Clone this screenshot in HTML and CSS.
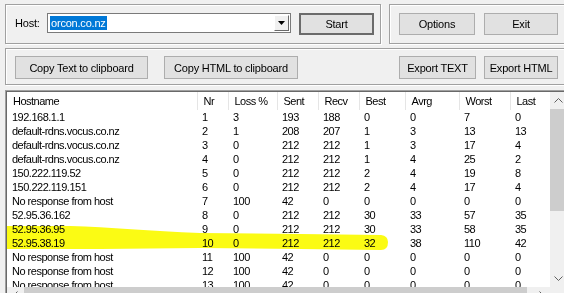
FILE: index.html
```html
<!DOCTYPE html>
<html>
<head>
    <title>Trace Route</title>
    <link rel="stylesheet" href="styles.css">
</head>
<body>
    <div class="app">
        <div class="top-row">
            <div class="group host-group">
                <span class="host-label">Host:</span>
                <div class="combo">
                    <span class="combo-text">orcon.co.nz</span>
                    <span class="combo-drop">
                        <svg width="7" height="4" viewBox="0 0 7 4"><polygon points="0,0 7,0 3.5,4" fill="#000"/></svg>
                    </span>
                </div>
                <button class="btn btn-default start-btn">Start</button>
            </div>
            <div class="group action-group">
                <button class="btn options-btn">Options</button>
                <button class="btn exit-btn">Exit</button>
            </div>
        </div>

        <div class="group export-group">
            <button class="btn copy-text-btn">Copy Text to clipboard</button>
            <button class="btn copy-html-btn">Copy HTML to clipboard</button>
            <button class="btn export-text-btn">Export TEXT</button>
            <button class="btn export-html-btn">Export HTML</button>
        </div>

        <div class="listview">
            <div class="list-body">
                <table class="hops">
                    <colgroup>
                        <col class="c-host"><col class="c-nr"><col class="c-loss"><col class="c-sent"><col class="c-recv">
                        <col class="c-best"><col class="c-avrg"><col class="c-worst"><col class="c-last">
                    </colgroup>
                    <thead>
                        <tr><th>Hostname</th><th>Nr</th><th>Loss %</th><th>Sent</th><th>Recv</th><th>Best</th><th>Avrg</th><th>Worst</th><th>Last</th></tr>
                    </thead>
                    <tbody>
                        <tr><td>192.168.1.1</td><td>1</td><td>3</td><td>193</td><td>188</td><td>0</td><td>0</td><td>7</td><td>0</td></tr>
                        <tr><td>default-rdns.vocus.co.nz</td><td>2</td><td>1</td><td>208</td><td>207</td><td>1</td><td>3</td><td>13</td><td>13</td></tr>
                        <tr><td>default-rdns.vocus.co.nz</td><td>3</td><td>0</td><td>212</td><td>212</td><td>1</td><td>3</td><td>17</td><td>4</td></tr>
                        <tr><td>default-rdns.vocus.co.nz</td><td>4</td><td>0</td><td>212</td><td>212</td><td>1</td><td>4</td><td>25</td><td>2</td></tr>
                        <tr><td>150.222.119.52</td><td>5</td><td>0</td><td>212</td><td>212</td><td>2</td><td>4</td><td>19</td><td>8</td></tr>
                        <tr><td>150.222.119.151</td><td>6</td><td>0</td><td>212</td><td>212</td><td>2</td><td>4</td><td>17</td><td>4</td></tr>
                        <tr><td>No response from host</td><td>7</td><td>100</td><td>42</td><td>0</td><td>0</td><td>0</td><td>0</td><td>0</td></tr>
                        <tr><td>52.95.36.162</td><td>8</td><td>0</td><td>212</td><td>212</td><td>30</td><td>33</td><td>57</td><td>35</td></tr>
                        <tr><td>52.95.36.95</td><td>9</td><td>0</td><td>212</td><td>212</td><td>30</td><td>33</td><td>58</td><td>35</td></tr>
                        <tr><td>52.95.38.19</td><td>10</td><td>0</td><td>212</td><td>212</td><td>32</td><td>38</td><td>110</td><td>42</td></tr>
                        <tr><td>No response from host</td><td>11</td><td>100</td><td>42</td><td>0</td><td>0</td><td>0</td><td>0</td><td>0</td></tr>
                        <tr><td>No response from host</td><td>12</td><td>100</td><td>42</td><td>0</td><td>0</td><td>0</td><td>0</td><td>0</td></tr>
                        <tr><td>No response from host</td><td>13</td><td>100</td><td>42</td><td>0</td><td>0</td><td>0</td><td>0</td><td>0</td></tr>
                    </tbody>
                </table>
            </div>

            <div class="vscroll">
                <span class="sb-btn">
                    <svg width="9" height="5" viewBox="0 0 9 5"><polyline points="0.5,4.5 4.5,0.5 8.5,4.5" fill="none" stroke="#606060"/></svg>
                </span>
                <span class="vthumb"></span>
                <span class="sb-btn sb-end">
                    <svg width="9" height="5" viewBox="0 0 9 5"><polyline points="0.5,0.5 4.5,4.5 8.5,0.5" fill="none" stroke="#606060"/></svg>
                </span>
            </div>

            <div class="hscroll">
                <span class="sb-btn">
                    <svg width="5" height="9" viewBox="0 0 5 9"><polyline points="4.5,0.5 0.5,4.5 4.5,8.5" fill="none" stroke="#606060"/></svg>
                </span>
                <span class="hthumb"></span>
                <span class="sb-btn sb-end">
                    <svg width="5" height="9" viewBox="0 0 5 9"><polyline points="0.5,0.5 4.5,4.5 0.5,8.5" fill="none" stroke="#606060"/></svg>
                </span>
            </div>
            <div class="corner"></div>
        </div>
    </div>

    <!-- highlighter stroke over hops 9 and 10 -->
    <svg class="marker" width="564" height="293" viewBox="0 0 564 293">
        <path d="M7,226 L70,226 C110,227 150,231 200,233 L300,234 L381,235 Q388,236 388,242 Q388,250 381,250 L300,249 L200,248 L100,249 L7,249 Z" fill="#fbfb14"/>
    </svg>
</body>
</html>
```

FILE: styles.css
```css
/* Reset */
* {
    margin: 0;
    padding: 0;
    box-sizing: border-box;
    font-family: "Liberation Sans", Arial, sans-serif;
}

html, body {
    width: 100%;
    height: 100%;
    overflow: hidden;
    background-color: #f0f0f0;
    color: #000;
    font-size: 11px;
}

.app {
    width: 600px;
    padding: 4px 0 0 5px;
}

/* Etched group boxes */
.group {
    border: 1px solid #a0a0a0;
    box-shadow: inset 1px 1px 0 #fff, 1px 1px 0 #fff;
}

.top-row {
    display: flex;
    gap: 8px;
}

.host-group {
    width: 376px;
    height: 40px;
    display: flex;
    align-items: flex-start;
    padding: 8px 0 0 9px;
}

.host-label {
    width: 32px;
    line-height: 20px;
    letter-spacing: -0.2px;
}

.combo {
    width: 244px;
    height: 20px;
    display: flex;
    align-items: center;
    padding-left: 2px;
    background: #fff;
    border: 1px solid #7a7a7a;
}

.combo-text {
    height: 14px;
    line-height: 14px;
    padding: 0 1px;
    background: #0078d7;
    color: #fff;
    letter-spacing: -0.2px;
}

.combo-drop {
    margin-left: auto;
    margin-right: 1px;
    width: 15px;
    height: 16px;
    display: flex;
    align-items: center;
    justify-content: center;
    background: #f0f0f0;
    border: 1px solid;
    border-color: #fff #696969 #696969 #fff;
}

/* Buttons */
.btn {
    height: 22px;
    font-size: 11px;
    letter-spacing: -0.2px;
    color: #000;
    background: #e1e1e1;
    border: 1px solid #adadad;
    cursor: pointer;
}

.btn-default {
    border: 2px solid #6b6b6b;
}

.start-btn {
    margin-left: 8px;
    width: 75px;
}

.action-group {
    width: 180px;
    height: 40px;
    display: flex;
    align-items: flex-start;
    gap: 9px;
    padding: 8px 0 0 9px;
}

.options-btn {
    width: 76px;
}

.exit-btn {
    width: 74px;
}

.export-group {
    margin-top: 4px;
    width: 600px;
    height: 37px;
    display: flex;
    align-items: flex-start;
    padding: 7px 0 0 9px;
}

.export-group .btn {
    height: 23px;
}

.copy-text-btn {
    width: 133px;
}

.copy-html-btn {
    width: 134px;
    margin-left: 16px;
}

.export-text-btn {
    width: 77px;
    margin-left: 101px;
}

.export-html-btn {
    width: 74px;
    margin-left: 8px;
}

/* List view */
.listview {
    margin-top: 5px;
    width: 564px;
    height: 216px;
    display: grid;
    grid-template-columns: 543px 17px;
    grid-template-rows: 195px 17px;
    padding: 1px 0 0 1px;
    background: #696969;
    border: 1px solid;
    border-color: #a0a0a0 #fff #fff #a0a0a0;
}

.list-body {
    background: #fff;
    overflow: hidden;
}

.hops {
    width: 543px;
    table-layout: fixed;
    border-collapse: collapse;
    letter-spacing: -0.5px;
}

.c-host { width: 190px; }
.c-nr { width: 31px; }
.c-loss { width: 49px; }
.c-sent { width: 41px; }
.c-recv { width: 41px; }
.c-best { width: 46px; }
.c-avrg { width: 54px; }
.c-worst { width: 51px; }
.c-last { width: 40px; }

.hops th {
    height: 18px;
    padding: 0 0 0 6px;
    text-align: left;
    font-weight: normal;
    border-right: 1px solid #e5e5e5;
    white-space: nowrap;
}

.hops td {
    height: 14px;
    line-height: 14px;
    padding: 0 0 0 5px;
    white-space: nowrap;
    overflow: hidden;
}

/* Scrollbars */
.vscroll {
    display: flex;
    flex-direction: column;
    background: #f0f0f0;
}

.hscroll {
    display: flex;
    background: #f0f0f0;
}

.sb-btn {
    flex: 0 0 17px;
    height: 17px;
    display: flex;
    align-items: center;
    justify-content: center;
}

.vscroll .sb-btn {
    width: 17px;
}

.sb-end {
    margin-top: auto;
}

.hscroll .sb-end {
    margin-top: 0;
    margin-left: auto;
}

.vthumb {
    height: 102px;
    background: #cdcdcd;
}

.hthumb {
    width: 503px;
    background: #cdcdcd;
}

.corner {
    background: #f0f0f0;
}

/* Marker highlight over content */
.marker {
    position: absolute;
    left: 0;
    top: 0;
    pointer-events: none;
    mix-blend-mode: multiply;
}
```
